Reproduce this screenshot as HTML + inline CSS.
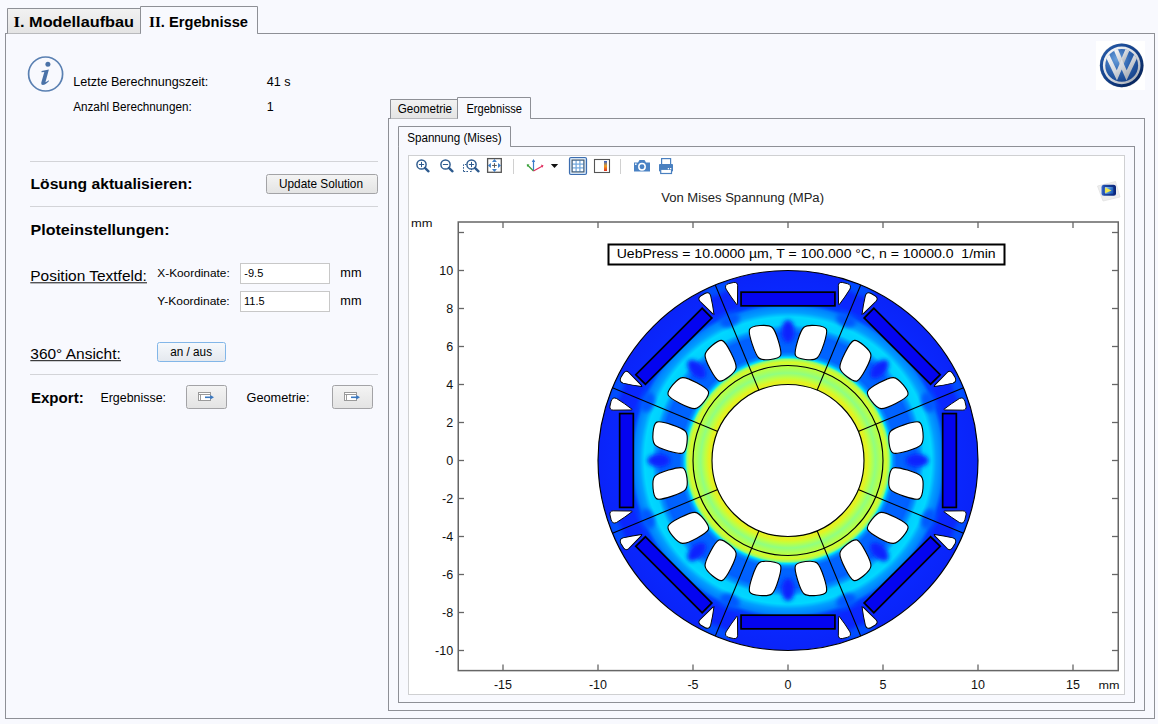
<!DOCTYPE html>
<html><head><meta charset="utf-8"><title>COMSOL App - Ergebnisse</title>
<style>
html,body{margin:0;padding:0;background:#f8f9fe;width:1158px;height:724px;overflow:hidden}
svg{display:block;font-family:"Liberation Sans",sans-serif}
</style></head><body>
<svg width="1158" height="724" viewBox="0 0 1158 724">
<defs>
<linearGradient id="tabg" x1="0" y1="0" x2="0" y2="1"><stop offset="0" stop-color="#f2f2f2"/><stop offset="1" stop-color="#e4e4e4"/></linearGradient>
<linearGradient id="btng" x1="0" y1="0" x2="0" y2="1"><stop offset="0" stop-color="#f4f4f4"/><stop offset="1" stop-color="#e3e3e3"/></linearGradient>
<linearGradient id="btnb" x1="0" y1="0" x2="0" y2="1"><stop offset="0" stop-color="#f6f9fc"/><stop offset="1" stop-color="#e4e8ee"/></linearGradient>
</defs>
<rect width="1158" height="724" fill="#f8f9fe"/>

<rect x="5.5" y="33.5" width="1149" height="685" fill="#f8f9fe" stroke="#8e9096"/>
<path d="M7.5 33.5 V8.5 H140.5 V33.5" fill="url(#tabg)" stroke="#8e9096"/>
<path d="M140.5 33.5 V6.5 H257.5 V33.5" fill="#f8f9fe" stroke="#8e9096"/>
<rect x="141" y="33" width="116" height="1.2" fill="#f8f9fe"/>
<text x="13.5" y="26.6" font-size="14.5" font-weight="bold" textLength="120.5" lengthAdjust="spacingAndGlyphs"><tspan font-family="Liberation Serif" font-size="15">I</tspan>. Modellaufbau</text>
<text x="149" y="26.6" font-size="14.5" font-weight="bold" textLength="99" lengthAdjust="spacingAndGlyphs"><tspan font-family="Liberation Serif" font-size="15">II</tspan>. Ergebnisse</text>
<circle cx="45.6" cy="74" r="17" fill="none" stroke="#5a80b2" stroke-width="1.7"/>
<circle cx="47.9" cy="64.2" r="2.5" fill="#4a72a8"/>
<path d="M41.6 70.9 L48.9 69.5 L45.4 82.2 Q46.9 81.6 48.7 80.3 L48.9 81.2 Q45.6 84.9 42.6 84.9 Q40.7 84.8 41.3 82.6 L44.3 72.1 L41.5 72.2 Z" fill="#4a72a8"/>
<text x="73.2" y="85.8" font-size="12" font-weight="normal" fill="#000" text-anchor="start" textLength="135" lengthAdjust="spacingAndGlyphs" >Letzte Berechnungszeit:</text>
<text x="266.8" y="85.8" font-size="12.5" font-weight="normal" fill="#000" text-anchor="start" textLength="23.8" lengthAdjust="spacingAndGlyphs" >41 s</text>
<text x="73.2" y="110.9" font-size="12" font-weight="normal" fill="#000" text-anchor="start" textLength="118.5" lengthAdjust="spacingAndGlyphs" >Anzahl Berechnungen:</text>
<text x="266.8" y="110.9" font-size="12.5" font-weight="normal" fill="#000" text-anchor="start" >1</text>
<line x1="30" y1="161.5" x2="378" y2="161.5" stroke="#d3d4d8"/>
<line x1="30" y1="206.5" x2="378" y2="206.5" stroke="#d3d4d8"/>
<line x1="30" y1="374.5" x2="378" y2="374.5" stroke="#d3d4d8"/>
<text x="30.5" y="189" font-size="14" font-weight="bold" fill="#000" text-anchor="start" textLength="162" lengthAdjust="spacingAndGlyphs" >Lösung aktualisieren:</text>
<rect x="266.5" y="174.5" width="111" height="19" rx="2" fill="url(#btng)" stroke="#a3a3a6"/>
<text x="279" y="188.2" font-size="12.2" font-weight="normal" fill="#000" text-anchor="start" textLength="84" lengthAdjust="spacingAndGlyphs" >Update Solution</text>
<text x="30.5" y="234.7" font-size="14" font-weight="bold" fill="#000" text-anchor="start" textLength="139" lengthAdjust="spacingAndGlyphs" >Ploteinstellungen:</text>
<text x="30.3" y="280.7" font-size="15" font-weight="normal" fill="#000" text-anchor="start" textLength="116.5" lengthAdjust="spacingAndGlyphs" >Position Textfeld:</text>
<line x1="30.3" y1="282.8" x2="147" y2="282.8" stroke="#111" stroke-width="1"/>
<text x="157.3" y="276.9" font-size="11" font-weight="normal" fill="#000" text-anchor="start" textLength="72.4" lengthAdjust="spacingAndGlyphs" >X-Koordinate:</text>
<text x="157.3" y="304.7" font-size="11" font-weight="normal" fill="#000" text-anchor="start" textLength="72.4" lengthAdjust="spacingAndGlyphs" >Y-Koordinate:</text>
<rect x="240.5" y="263.5" width="89" height="20" fill="#fff" stroke="#c8c8c8"/>
<rect x="240.5" y="291.5" width="89" height="20" fill="#fff" stroke="#c8c8c8"/>
<text x="244.3" y="277.3" font-size="11" font-weight="normal" fill="#000" text-anchor="start" >-9.5</text>
<text x="244" y="305" font-size="11" font-weight="normal" fill="#000" text-anchor="start" >11.5</text>
<text x="340.3" y="277" font-size="12" font-weight="normal" fill="#000" text-anchor="start" textLength="21.2" lengthAdjust="spacingAndGlyphs" >mm</text>
<text x="340.3" y="305" font-size="12" font-weight="normal" fill="#000" text-anchor="start" textLength="21.2" lengthAdjust="spacingAndGlyphs" >mm</text>
<text x="30.3" y="358.6" font-size="15" font-weight="normal" fill="#000" text-anchor="start" textLength="90.5" lengthAdjust="spacingAndGlyphs" >360° Ansicht:</text>
<line x1="30.3" y1="360.7" x2="121" y2="360.7" stroke="#111" stroke-width="1"/>
<rect x="157.5" y="342.5" width="68" height="19" rx="2" fill="url(#btnb)" stroke="#82b6e8"/>
<text x="170.3" y="356.4" font-size="12" font-weight="normal" fill="#000" text-anchor="start" textLength="41.7" lengthAdjust="spacingAndGlyphs" >an / aus</text>
<text x="30.9" y="403" font-size="14.6" font-weight="bold" fill="#000" text-anchor="start" textLength="52.8" lengthAdjust="spacingAndGlyphs" >Export:</text>
<text x="100.4" y="402" font-size="12.5" font-weight="normal" fill="#000" text-anchor="start" textLength="65.6" lengthAdjust="spacingAndGlyphs" >Ergebnisse:</text>
<text x="246.5" y="402" font-size="12.5" font-weight="normal" fill="#000" text-anchor="start" textLength="63" lengthAdjust="spacingAndGlyphs" >Geometrie:</text>
<rect x="186.5" y="385.5" width="40" height="23" rx="2" fill="url(#btng)" stroke="#a3a3a6"/>
<rect x="198.5" y="392.5" width="12" height="8" fill="#fff" stroke="#9a9a9a" stroke-width="1"/>
<path d="M198.5 394.5 H210.5 M200.5 394.5 V400.5" fill="none" stroke="#9a9a9a" stroke-width="1"/>
<path d="M205 397.3 H211" stroke="#3a78c0" stroke-width="1.6"/><path d="M210.3 395 L214 397.3 L210.3 399.6 Z" fill="#3a78c0"/>
<rect x="332.5" y="385.5" width="40" height="23" rx="2" fill="url(#btng)" stroke="#a3a3a6"/>
<rect x="344.5" y="392.5" width="12" height="8" fill="#fff" stroke="#9a9a9a" stroke-width="1"/>
<path d="M344.5 394.5 H356.5 M346.5 394.5 V400.5" fill="none" stroke="#9a9a9a" stroke-width="1"/>
<path d="M351 397.3 H357" stroke="#3a78c0" stroke-width="1.6"/><path d="M356.3 395 L360 397.3 L356.3 399.6 Z" fill="#3a78c0"/>
<rect x="1096" y="41" width="49" height="49" fill="#fff"/>
<g transform="translate(1121.7 65.4)">
<defs><radialGradient id="vwb" cx="0.35" cy="0.3" r="0.8"><stop offset="0" stop-color="#6aa0dc"/><stop offset="0.5" stop-color="#2e64b0"/><stop offset="1" stop-color="#143f86"/></radialGradient>
<linearGradient id="vwo" x1="0" y1="0" x2="1" y2="1"><stop offset="0" stop-color="#2a5eac"/><stop offset="0.5" stop-color="#123f88"/><stop offset="1" stop-color="#041c4c"/></linearGradient>
<linearGradient id="vws" x1="0" y1="0" x2="1" y2="1"><stop offset="0" stop-color="#ffffff"/><stop offset="0.55" stop-color="#d4d8de"/><stop offset="1" stop-color="#9aa0a8"/></linearGradient>
<clipPath id="vwc"><circle r="16.6"/></clipPath></defs>
<circle r="22" fill="#c8ccd2"/>
<circle r="21.8" fill="url(#vwo)"/>
<circle r="18.8" fill="url(#vws)"/>
<circle r="16.4" fill="url(#vwb)"/>
<g clip-path="url(#vwc)" fill="none" stroke="url(#vws)" stroke-width="4.2" stroke-linejoin="miter" stroke-miterlimit="10">
<path d="M-7.0 -18.5 L0 -2.0 L7.0 -18.5"/>
<path d="M-16 -13.5 L-4.85 10 L0 -1.2 L4.85 10 L16 -13.5"/>
</g>
</g>
<rect x="388.5" y="118.5" width="756" height="592" fill="#f8f9fe" stroke="#8e9096"/>
<path d="M390.5 118.5 V99.5 H457.5 V118.5" fill="url(#tabg)" stroke="#8e9096"/>
<path d="M457.5 118.5 V97.5 H530.5 V118.5" fill="#f8f9fe" stroke="#8e9096"/>
<rect x="458" y="118" width="72" height="1.2" fill="#f8f9fe"/>
<text x="397.7" y="112.9" font-size="12.2" font-weight="normal" fill="#000" text-anchor="start" textLength="54.4" lengthAdjust="spacingAndGlyphs" >Geometrie</text>
<text x="466.4" y="112.9" font-size="12.2" font-weight="normal" fill="#000" text-anchor="start" textLength="55.6" lengthAdjust="spacingAndGlyphs" >Ergebnisse</text>
<rect x="398.5" y="146.5" width="736" height="556" fill="#f8f9fe" stroke="#8e9096"/>
<path d="M398.5 146.5 V126.5 H510.5 V146.5" fill="#f8f9fe" stroke="#8e9096"/>
<rect x="399" y="146" width="111" height="1.2" fill="#f8f9fe"/>
<text x="407.2" y="142.2" font-size="12" font-weight="normal" fill="#000" text-anchor="start" textLength="94.4" lengthAdjust="spacingAndGlyphs" >Spannung (Mises)</text>
<rect x="408.5" y="155.5" width="716" height="539" fill="#fff" stroke="#cfd0d2"/>
<circle cx="421.5" cy="164.5" r="4.6" fill="none" stroke="#2d5a8e" stroke-width="1.45"/>
<line x1="424.9" y1="167.9" x2="428.5" y2="171.3" stroke="#2d5a8e" stroke-width="2.4" stroke-linecap="round"/>
<line x1="418.9" y1="164.5" x2="424.1" y2="164.5" stroke="#2d5a8e" stroke-width="1"/>
<line x1="421.5" y1="161.9" x2="421.5" y2="167.1" stroke="#2d5a8e" stroke-width="1"/>
<circle cx="445.5" cy="164.5" r="4.6" fill="none" stroke="#2d5a8e" stroke-width="1.45"/>
<line x1="448.9" y1="167.9" x2="452.5" y2="171.3" stroke="#2d5a8e" stroke-width="2.4" stroke-linecap="round"/>
<line x1="442.9" y1="164.5" x2="448.1" y2="164.5" stroke="#2d5a8e" stroke-width="1"/>
<path d="M463.5 171.5 V164.5 H466 M468 171.5 H463.5 M470 171.5 H471.5 V169" fill="none" stroke="#2d5a8e" stroke-width="1" stroke-dasharray="1.6 1.2"/>
<circle cx="471.5" cy="164.5" r="4.6" fill="none" stroke="#2d5a8e" stroke-width="1.45"/>
<line x1="474.9" y1="167.9" x2="478.5" y2="171.3" stroke="#2d5a8e" stroke-width="2.4" stroke-linecap="round"/>
<line x1="468.9" y1="164.5" x2="474.1" y2="164.5" stroke="#2d5a8e" stroke-width="1"/>
<line x1="471.5" y1="161.9" x2="471.5" y2="167.1" stroke="#2d5a8e" stroke-width="1"/>
<rect x="487.6" y="158.6" width="13.7" height="13.7" fill="#fff" stroke="#555" stroke-width="1.3"/>
<path d="M494.45 163.1 V167.8 M492.1 165.45 H496.8" stroke="#555" stroke-width="1"/>
<path d="M492 161.9 L494.45 158.9 L496.9 161.9 Z M492 169.0 L494.45 172.0 L496.9 169.0 Z M490.9 163.0 L487.9 165.45 L490.9 167.9 Z M498.0 163.0 L501.0 165.45 L498.0 167.9 Z" fill="#3f7fc8"/>
<line x1="513.5" y1="159" x2="513.5" y2="174" stroke="#d0d0d0"/>
<path d="M533.5 171 V160" stroke="#3a7ac8" stroke-width="1.2"/><path d="M531.8 162 L533.5 159 L535.2 162Z" fill="#3a7ac8"/>
<path d="M533.5 171 L527.5 165" stroke="#3aa03a" stroke-width="1.2"/><path d="M527 167 L526.8 164.3 L529.5 164.5Z" fill="#3aa03a"/>
<path d="M533.5 171 L542.5 166" stroke="#e03060" stroke-width="1.2"/><path d="M541 164.6 L543.6 165.4 L542.1 167.8Z" fill="#e03060"/>
<path d="M550.8 164 H558.2 L554.5 168 Z" fill="#111"/>
<rect x="569.5" y="157.5" width="17" height="17" rx="1.5" fill="#cfe3f7" stroke="#3c6db0" stroke-width="1.2"/>
<rect x="572" y="160" width="12" height="12" fill="#6fa6dc" stroke="#444" stroke-width="0.8"/>
<rect x="572.9" y="160.9" width="2.6" height="2.6" fill="#fff"/>
<rect x="572.9" y="164.70000000000002" width="2.6" height="2.6" fill="#fff"/>
<rect x="572.9" y="168.5" width="2.6" height="2.6" fill="#fff"/>
<rect x="576.6999999999999" y="160.9" width="2.6" height="2.6" fill="#fff"/>
<rect x="576.6999999999999" y="164.70000000000002" width="2.6" height="2.6" fill="#fff"/>
<rect x="576.6999999999999" y="168.5" width="2.6" height="2.6" fill="#fff"/>
<rect x="580.5" y="160.9" width="2.6" height="2.6" fill="#fff"/>
<rect x="580.5" y="164.70000000000002" width="2.6" height="2.6" fill="#fff"/>
<rect x="580.5" y="168.5" width="2.6" height="2.6" fill="#fff"/>
<rect x="594.5" y="159.5" width="15" height="13" fill="#fff" stroke="#555" stroke-width="1.1"/>
<defs><linearGradient id="lg" x1="0" y1="0" x2="0" y2="1"><stop offset="0" stop-color="#3060d0"/><stop offset="0.5" stop-color="#f0a020"/><stop offset="1" stop-color="#e03020"/></linearGradient></defs>
<rect x="604" y="161" width="3" height="10" fill="url(#lg)"/>
<line x1="620.5" y1="159" x2="620.5" y2="174" stroke="#d0d0d0"/>
<path d="M634 162.5 H638 L639.5 160 H644.5 L646 162.5 H650 V171.5 H634 Z" fill="#4a82c4"/>
<circle cx="642" cy="166.8" r="3.2" fill="none" stroke="#fff" stroke-width="1.5"/>
<rect x="635" y="163.5" width="1.6" height="1.4" fill="#fff"/>
<rect x="661.6" y="158.6" width="9" height="6" fill="#fff" stroke="#4a80c0" stroke-width="1.2"/>
<rect x="659" y="164" width="14" height="7.6" rx="0.8" fill="#4a80c0"/>
<rect x="660.7" y="169.3" width="10.8" height="4.2" fill="#fff" stroke="#4a80c0" stroke-width="1.2"/>
<rect x="667.8" y="168" width="1.3" height="1.3" fill="#fff"/><rect x="670" y="168" width="1.3" height="1.3" fill="#fff"/>
<text x="661.2" y="202.1" font-size="12.5" font-weight="normal" fill="#222" text-anchor="start" textLength="162.8" lengthAdjust="spacingAndGlyphs" >Von Mises Spannung (MPa)</text>
<defs><linearGradient id="icy" x1="0" y1="0" x2="1" y2="0.3"><stop offset="0" stop-color="#b8d8f0"/><stop offset="0.5" stop-color="#5a9ee0"/><stop offset="1" stop-color="#1e5cb8"/></linearGradient><linearGradient id="icb" x1="0" y1="0" x2="1" y2="0"><stop offset="0" stop-color="#3a6ed0"/><stop offset="0.2" stop-color="#1f4aa8"/><stop offset="1" stop-color="#0a2478"/></linearGradient></defs>
<path d="M1097.5 186 L1115.5 181.5 L1120 197 L1103 201 Z" fill="#eeeeee" stroke="#e2e2e2" stroke-width="0.8"/>
<rect x="1101.5" y="184.8" width="14.5" height="11" rx="2.5" fill="url(#icb)"/>
<rect x="1104.8" y="187" width="8.5" height="6.8" rx="0.8" fill="url(#icy)"/>
<path d="M1105.2 187.5 L1111.5 190.4 L1105.2 193.3 Z" fill="#f4ea48"/>
<rect x="458.25" y="222" width="660" height="448.6" fill="none" stroke="#666666" stroke-width="1.5"/>
<line x1="503" y1="670.5" x2="503" y2="664.5" stroke="#666666" stroke-width="1.3"/>
<line x1="503" y1="222" x2="503" y2="228" stroke="#666666" stroke-width="1.3"/>
<text x="503" y="689" font-size="12.5" font-weight="normal" fill="#111" text-anchor="middle" >-15</text>
<line x1="598" y1="670.5" x2="598" y2="664.5" stroke="#666666" stroke-width="1.3"/>
<line x1="598" y1="222" x2="598" y2="228" stroke="#666666" stroke-width="1.3"/>
<text x="598" y="689" font-size="12.5" font-weight="normal" fill="#111" text-anchor="middle" >-10</text>
<line x1="693" y1="670.5" x2="693" y2="664.5" stroke="#666666" stroke-width="1.3"/>
<line x1="693" y1="222" x2="693" y2="228" stroke="#666666" stroke-width="1.3"/>
<text x="693" y="689" font-size="12.5" font-weight="normal" fill="#111" text-anchor="middle" >-5</text>
<line x1="788" y1="670.5" x2="788" y2="664.5" stroke="#666666" stroke-width="1.3"/>
<line x1="788" y1="222" x2="788" y2="228" stroke="#666666" stroke-width="1.3"/>
<text x="788" y="689" font-size="12.5" font-weight="normal" fill="#111" text-anchor="middle" >0</text>
<line x1="883" y1="670.5" x2="883" y2="664.5" stroke="#666666" stroke-width="1.3"/>
<line x1="883" y1="222" x2="883" y2="228" stroke="#666666" stroke-width="1.3"/>
<text x="883" y="689" font-size="12.5" font-weight="normal" fill="#111" text-anchor="middle" >5</text>
<line x1="978" y1="670.5" x2="978" y2="664.5" stroke="#666666" stroke-width="1.3"/>
<line x1="978" y1="222" x2="978" y2="228" stroke="#666666" stroke-width="1.3"/>
<text x="978" y="689" font-size="12.5" font-weight="normal" fill="#111" text-anchor="middle" >10</text>
<line x1="1073" y1="670.5" x2="1073" y2="664.5" stroke="#666666" stroke-width="1.3"/>
<line x1="1073" y1="222" x2="1073" y2="228" stroke="#666666" stroke-width="1.3"/>
<text x="1073" y="689" font-size="12.5" font-weight="normal" fill="#111" text-anchor="middle" >15</text>
<line x1="458" y1="650.5" x2="464" y2="650.5" stroke="#666666" stroke-width="1.3"/>
<line x1="1118" y1="650.5" x2="1112" y2="650.5" stroke="#666666" stroke-width="1.3"/>
<text x="453.2" y="654.9" font-size="12.5" font-weight="normal" fill="#111" text-anchor="end" >-10</text>
<line x1="458" y1="612.5" x2="464" y2="612.5" stroke="#666666" stroke-width="1.3"/>
<line x1="1118" y1="612.5" x2="1112" y2="612.5" stroke="#666666" stroke-width="1.3"/>
<text x="453.2" y="616.9" font-size="12.5" font-weight="normal" fill="#111" text-anchor="end" >-8</text>
<line x1="458" y1="574.5" x2="464" y2="574.5" stroke="#666666" stroke-width="1.3"/>
<line x1="1118" y1="574.5" x2="1112" y2="574.5" stroke="#666666" stroke-width="1.3"/>
<text x="453.2" y="578.9" font-size="12.5" font-weight="normal" fill="#111" text-anchor="end" >-6</text>
<line x1="458" y1="536.5" x2="464" y2="536.5" stroke="#666666" stroke-width="1.3"/>
<line x1="1118" y1="536.5" x2="1112" y2="536.5" stroke="#666666" stroke-width="1.3"/>
<text x="453.2" y="540.9" font-size="12.5" font-weight="normal" fill="#111" text-anchor="end" >-4</text>
<line x1="458" y1="498.5" x2="464" y2="498.5" stroke="#666666" stroke-width="1.3"/>
<line x1="1118" y1="498.5" x2="1112" y2="498.5" stroke="#666666" stroke-width="1.3"/>
<text x="453.2" y="502.9" font-size="12.5" font-weight="normal" fill="#111" text-anchor="end" >-2</text>
<line x1="458" y1="460.5" x2="464" y2="460.5" stroke="#666666" stroke-width="1.3"/>
<line x1="1118" y1="460.5" x2="1112" y2="460.5" stroke="#666666" stroke-width="1.3"/>
<text x="453.2" y="464.9" font-size="12.5" font-weight="normal" fill="#111" text-anchor="end" >0</text>
<line x1="458" y1="422.5" x2="464" y2="422.5" stroke="#666666" stroke-width="1.3"/>
<line x1="1118" y1="422.5" x2="1112" y2="422.5" stroke="#666666" stroke-width="1.3"/>
<text x="453.2" y="426.9" font-size="12.5" font-weight="normal" fill="#111" text-anchor="end" >2</text>
<line x1="458" y1="384.5" x2="464" y2="384.5" stroke="#666666" stroke-width="1.3"/>
<line x1="1118" y1="384.5" x2="1112" y2="384.5" stroke="#666666" stroke-width="1.3"/>
<text x="453.2" y="388.9" font-size="12.5" font-weight="normal" fill="#111" text-anchor="end" >4</text>
<line x1="458" y1="346.5" x2="464" y2="346.5" stroke="#666666" stroke-width="1.3"/>
<line x1="1118" y1="346.5" x2="1112" y2="346.5" stroke="#666666" stroke-width="1.3"/>
<text x="453.2" y="350.9" font-size="12.5" font-weight="normal" fill="#111" text-anchor="end" >6</text>
<line x1="458" y1="308.5" x2="464" y2="308.5" stroke="#666666" stroke-width="1.3"/>
<line x1="1118" y1="308.5" x2="1112" y2="308.5" stroke="#666666" stroke-width="1.3"/>
<text x="453.2" y="312.9" font-size="12.5" font-weight="normal" fill="#111" text-anchor="end" >8</text>
<line x1="458" y1="270.5" x2="464" y2="270.5" stroke="#666666" stroke-width="1.3"/>
<line x1="1118" y1="270.5" x2="1112" y2="270.5" stroke="#666666" stroke-width="1.3"/>
<text x="453.2" y="274.9" font-size="12.5" font-weight="normal" fill="#111" text-anchor="end" >10</text>
<line x1="458" y1="232.5" x2="464" y2="232.5" stroke="#666666" stroke-width="1.3"/>
<line x1="1118" y1="232.5" x2="1112" y2="232.5" stroke="#666666" stroke-width="1.3"/>
<text x="411" y="226.8" font-size="11.5" font-weight="normal" fill="#111" text-anchor="start" textLength="21.5" lengthAdjust="spacingAndGlyphs" >mm</text>
<text x="1098.5" y="689" font-size="11.5" font-weight="normal" fill="#111" text-anchor="start" textLength="21" lengthAdjust="spacingAndGlyphs" >mm</text>
<g transform="translate(788 460.5) scale(19)">
<defs>
<radialGradient id="field" cx="0" cy="0" r="10" gradientUnits="userSpaceOnUse">
<stop offset="0.400" stop-color="#d8f828"/>
<stop offset="0.415" stop-color="#e8f020"/>
<stop offset="0.435" stop-color="#c0ff40"/>
<stop offset="0.460" stop-color="#90ff80"/>
<stop offset="0.485" stop-color="#b0ff50"/>
<stop offset="0.502" stop-color="#c0ff40"/>
<stop offset="0.517" stop-color="#d8f828"/>
<stop offset="0.532" stop-color="#90ff70"/>
<stop offset="0.542" stop-color="#00e0ff"/>
<stop offset="0.555" stop-color="#0090ff"/>
<stop offset="0.572" stop-color="#0064ff"/>
<stop offset="0.670" stop-color="#0060ff"/>
<stop offset="0.695" stop-color="#0090ff"/>
<stop offset="0.715" stop-color="#00d0ff"/>
<stop offset="0.755" stop-color="#00d8ff"/>
<stop offset="0.780" stop-color="#00a0ff"/>
<stop offset="0.810" stop-color="#0080ff"/>
<stop offset="0.830" stop-color="#0040ff"/>
<stop offset="0.860" stop-color="#0a28ff"/>
<stop offset="1.000" stop-color="#0a24f8"/>
</radialGradient>
<filter id="blur1" x="-50%" y="-50%" width="200%" height="200%"><feGaussianBlur stdDeviation="0.12"/></filter>
<clipPath id="disk"><circle r="10"/></clipPath>
</defs>
<circle r="10" fill="url(#field)"/>
<g clip-path="url(#disk)" filter="url(#blur1)">
<ellipse cx="6.8" cy="0" rx="0.6" ry="0.34" fill="#0a20ff" transform="rotate(0)"/>
<ellipse cx="9.75" cy="0" rx="0.3" ry="0.9" fill="#0050ff" transform="rotate(-22.5)"/>
<ellipse cx="8.0" cy="0" rx="0.35" ry="0.55" fill="#0058ff" transform="rotate(-22.5)"/>
<ellipse cx="6.8" cy="0" rx="0.6" ry="0.34" fill="#0a20ff" transform="rotate(-45)"/>
<ellipse cx="9.75" cy="0" rx="0.3" ry="0.9" fill="#0050ff" transform="rotate(-67.5)"/>
<ellipse cx="8.0" cy="0" rx="0.35" ry="0.55" fill="#0058ff" transform="rotate(-67.5)"/>
<ellipse cx="6.8" cy="0" rx="0.6" ry="0.34" fill="#0a20ff" transform="rotate(-90)"/>
<ellipse cx="9.75" cy="0" rx="0.3" ry="0.9" fill="#0050ff" transform="rotate(-112.5)"/>
<ellipse cx="8.0" cy="0" rx="0.35" ry="0.55" fill="#0058ff" transform="rotate(-112.5)"/>
<ellipse cx="6.8" cy="0" rx="0.6" ry="0.34" fill="#0a20ff" transform="rotate(-135)"/>
<ellipse cx="9.75" cy="0" rx="0.3" ry="0.9" fill="#0050ff" transform="rotate(-157.5)"/>
<ellipse cx="8.0" cy="0" rx="0.35" ry="0.55" fill="#0058ff" transform="rotate(-157.5)"/>
<ellipse cx="6.8" cy="0" rx="0.6" ry="0.34" fill="#0a20ff" transform="rotate(-180)"/>
<ellipse cx="9.75" cy="0" rx="0.3" ry="0.9" fill="#0050ff" transform="rotate(-202.5)"/>
<ellipse cx="8.0" cy="0" rx="0.35" ry="0.55" fill="#0058ff" transform="rotate(-202.5)"/>
<ellipse cx="6.8" cy="0" rx="0.6" ry="0.34" fill="#0a20ff" transform="rotate(-225)"/>
<ellipse cx="9.75" cy="0" rx="0.3" ry="0.9" fill="#0050ff" transform="rotate(-247.5)"/>
<ellipse cx="8.0" cy="0" rx="0.35" ry="0.55" fill="#0058ff" transform="rotate(-247.5)"/>
<ellipse cx="6.8" cy="0" rx="0.6" ry="0.34" fill="#0a20ff" transform="rotate(-270)"/>
<ellipse cx="9.75" cy="0" rx="0.3" ry="0.9" fill="#0050ff" transform="rotate(-292.5)"/>
<ellipse cx="8.0" cy="0" rx="0.35" ry="0.55" fill="#0058ff" transform="rotate(-292.5)"/>
<ellipse cx="6.8" cy="0" rx="0.6" ry="0.34" fill="#0a20ff" transform="rotate(-315)"/>
<ellipse cx="9.75" cy="0" rx="0.3" ry="0.9" fill="#0050ff" transform="rotate(-337.5)"/>
<ellipse cx="8.0" cy="0" rx="0.35" ry="0.55" fill="#0058ff" transform="rotate(-337.5)"/>
</g>
<g fill="#fff" stroke="#000" stroke-width="0.06">
<path d="M5.318 -0.916 C5.241 -1.525 5.323 -1.622 6.136 -1.888 C6.949 -2.154 7.046 -2.113 7.103 -1.476 C7.160 -0.839 7.078 -0.742 6.285 -0.504 C5.492 -0.265 5.395 -0.306 5.318 -0.916 Z"/>
<path d="M5.318 0.916 C5.241 1.525 5.323 1.622 6.136 1.888 C6.949 2.154 7.046 2.113 7.103 1.476 C7.160 0.839 7.078 0.742 6.285 0.504 C5.492 0.265 5.395 0.306 5.318 0.916 Z"/>
<path d="M3.113 -4.408 C2.627 -4.784 2.617 -4.911 3.003 -5.674 C3.390 -6.437 3.488 -6.476 3.979 -6.067 C4.469 -5.657 4.480 -5.530 4.088 -4.800 C3.696 -4.071 3.598 -4.031 3.113 -4.408 Z"/>
<path d="M4.408 -3.113 C4.784 -2.627 4.911 -2.617 5.674 -3.003 C6.437 -3.390 6.476 -3.488 6.067 -3.979 C5.657 -4.469 5.530 -4.480 4.800 -4.088 C4.071 -3.696 4.031 -3.598 4.408 -3.113 Z"/>
<path d="M-0.916 -5.318 C-1.525 -5.241 -1.622 -5.323 -1.888 -6.136 C-2.154 -6.949 -2.113 -7.046 -1.476 -7.103 C-0.839 -7.160 -0.742 -7.078 -0.504 -6.285 C-0.265 -5.492 -0.306 -5.395 -0.916 -5.318 Z"/>
<path d="M0.916 -5.318 C1.525 -5.241 1.622 -5.323 1.888 -6.136 C2.154 -6.949 2.113 -7.046 1.476 -7.103 C0.839 -7.160 0.742 -7.078 0.504 -6.285 C0.265 -5.492 0.306 -5.395 0.916 -5.318 Z"/>
<path d="M-4.408 -3.113 C-4.784 -2.627 -4.911 -2.617 -5.674 -3.003 C-6.437 -3.390 -6.476 -3.488 -6.067 -3.979 C-5.657 -4.469 -5.530 -4.480 -4.800 -4.088 C-4.071 -3.696 -4.031 -3.598 -4.408 -3.113 Z"/>
<path d="M-3.113 -4.408 C-2.627 -4.784 -2.617 -4.911 -3.003 -5.674 C-3.390 -6.437 -3.488 -6.476 -3.979 -6.067 C-4.469 -5.657 -4.480 -5.530 -4.088 -4.800 C-3.696 -4.071 -3.598 -4.031 -3.113 -4.408 Z"/>
<path d="M-5.318 0.916 C-5.241 1.525 -5.323 1.622 -6.136 1.888 C-6.949 2.154 -7.046 2.113 -7.103 1.476 C-7.160 0.839 -7.078 0.742 -6.285 0.504 C-5.492 0.265 -5.395 0.306 -5.318 0.916 Z"/>
<path d="M-5.318 -0.916 C-5.241 -1.525 -5.323 -1.622 -6.136 -1.888 C-6.949 -2.154 -7.046 -2.113 -7.103 -1.476 C-7.160 -0.839 -7.078 -0.742 -6.285 -0.504 C-5.492 -0.265 -5.395 -0.306 -5.318 -0.916 Z"/>
<path d="M-3.113 4.408 C-2.627 4.784 -2.617 4.911 -3.003 5.674 C-3.390 6.437 -3.488 6.476 -3.979 6.067 C-4.469 5.657 -4.480 5.530 -4.088 4.800 C-3.696 4.071 -3.598 4.031 -3.113 4.408 Z"/>
<path d="M-4.408 3.113 C-4.784 2.627 -4.911 2.617 -5.674 3.003 C-6.437 3.390 -6.476 3.488 -6.067 3.979 C-5.657 4.469 -5.530 4.480 -4.800 4.088 C-4.071 3.696 -4.031 3.598 -4.408 3.113 Z"/>
<path d="M0.916 5.318 C1.525 5.241 1.622 5.323 1.888 6.136 C2.154 6.949 2.113 7.046 1.476 7.103 C0.839 7.160 0.742 7.078 0.504 6.285 C0.265 5.492 0.306 5.395 0.916 5.318 Z"/>
<path d="M-0.916 5.318 C-1.525 5.241 -1.622 5.323 -1.888 6.136 C-2.154 6.949 -2.113 7.046 -1.476 7.103 C-0.839 7.160 -0.742 7.078 -0.504 6.285 C-0.265 5.492 -0.306 5.395 -0.916 5.318 Z"/>
<path d="M4.408 3.113 C4.784 2.627 4.911 2.617 5.674 3.003 C6.437 3.390 6.476 3.488 6.067 3.979 C5.657 4.469 5.530 4.480 4.800 4.088 C4.071 3.696 4.031 3.598 4.408 3.113 Z"/>
<path d="M3.113 4.408 C2.627 4.784 2.617 4.911 3.003 5.674 C3.390 6.437 3.488 6.476 3.979 6.067 C4.469 5.657 4.480 5.530 4.088 4.800 C3.696 4.071 3.598 4.031 3.113 4.408 Z"/>
</g>
<circle r="4" fill="#fff" stroke="#000" stroke-width="0.06"/>
<circle r="5" fill="none" stroke="#000" stroke-width="0.06"/>
<line x1="0" y1="-4" x2="0" y2="-10" transform="rotate(22.5)" stroke="#000" stroke-width="0.055"/>
<line x1="0" y1="-4" x2="0" y2="-10" transform="rotate(67.5)" stroke="#000" stroke-width="0.055"/>
<line x1="0" y1="-4" x2="0" y2="-10" transform="rotate(112.5)" stroke="#000" stroke-width="0.055"/>
<line x1="0" y1="-4" x2="0" y2="-10" transform="rotate(157.5)" stroke="#000" stroke-width="0.055"/>
<line x1="0" y1="-4" x2="0" y2="-10" transform="rotate(202.5)" stroke="#000" stroke-width="0.055"/>
<line x1="0" y1="-4" x2="0" y2="-10" transform="rotate(247.5)" stroke="#000" stroke-width="0.055"/>
<line x1="0" y1="-4" x2="0" y2="-10" transform="rotate(292.5)" stroke="#000" stroke-width="0.055"/>
<line x1="0" y1="-4" x2="0" y2="-10" transform="rotate(337.5)" stroke="#000" stroke-width="0.055"/>
<g transform="rotate(0)">
<rect x="-2.47" y="-8.86" width="4.94" height="0.72" fill="#0404f0" stroke="#000" stroke-width="0.09"/>
<path d="M2.66 -8.25 L2.65 -9.2 Q2.66 -9.4 2.86 -9.37 L3.12 -9.31 Q3.36 -9.24 3.26 -9.02 Q3.0 -8.6 2.69 -8.2 Z" fill="#fff" stroke="#000" stroke-width="0.05"/>
<path d="M-2.66 -8.25 L-2.65 -9.2 Q-2.66 -9.4 -2.86 -9.37 L-3.12 -9.31 Q-3.36 -9.24 -3.26 -9.02 Q-3.0 -8.6 -2.69 -8.2 Z" fill="#fff" stroke="#000" stroke-width="0.05"/>
</g>
<g transform="rotate(45)">
<rect x="-2.47" y="-8.86" width="4.94" height="0.72" fill="#0404f0" stroke="#000" stroke-width="0.09"/>
<path d="M2.66 -8.25 L2.65 -9.2 Q2.66 -9.4 2.86 -9.37 L3.12 -9.31 Q3.36 -9.24 3.26 -9.02 Q3.0 -8.6 2.69 -8.2 Z" fill="#fff" stroke="#000" stroke-width="0.05"/>
<path d="M-2.66 -8.25 L-2.65 -9.2 Q-2.66 -9.4 -2.86 -9.37 L-3.12 -9.31 Q-3.36 -9.24 -3.26 -9.02 Q-3.0 -8.6 -2.69 -8.2 Z" fill="#fff" stroke="#000" stroke-width="0.05"/>
</g>
<g transform="rotate(90)">
<rect x="-2.47" y="-8.86" width="4.94" height="0.72" fill="#0404f0" stroke="#000" stroke-width="0.09"/>
<path d="M2.66 -8.25 L2.65 -9.2 Q2.66 -9.4 2.86 -9.37 L3.12 -9.31 Q3.36 -9.24 3.26 -9.02 Q3.0 -8.6 2.69 -8.2 Z" fill="#fff" stroke="#000" stroke-width="0.05"/>
<path d="M-2.66 -8.25 L-2.65 -9.2 Q-2.66 -9.4 -2.86 -9.37 L-3.12 -9.31 Q-3.36 -9.24 -3.26 -9.02 Q-3.0 -8.6 -2.69 -8.2 Z" fill="#fff" stroke="#000" stroke-width="0.05"/>
</g>
<g transform="rotate(135)">
<rect x="-2.47" y="-8.86" width="4.94" height="0.72" fill="#0404f0" stroke="#000" stroke-width="0.09"/>
<path d="M2.66 -8.25 L2.65 -9.2 Q2.66 -9.4 2.86 -9.37 L3.12 -9.31 Q3.36 -9.24 3.26 -9.02 Q3.0 -8.6 2.69 -8.2 Z" fill="#fff" stroke="#000" stroke-width="0.05"/>
<path d="M-2.66 -8.25 L-2.65 -9.2 Q-2.66 -9.4 -2.86 -9.37 L-3.12 -9.31 Q-3.36 -9.24 -3.26 -9.02 Q-3.0 -8.6 -2.69 -8.2 Z" fill="#fff" stroke="#000" stroke-width="0.05"/>
</g>
<g transform="rotate(180)">
<rect x="-2.47" y="-8.86" width="4.94" height="0.72" fill="#0404f0" stroke="#000" stroke-width="0.09"/>
<path d="M2.66 -8.25 L2.65 -9.2 Q2.66 -9.4 2.86 -9.37 L3.12 -9.31 Q3.36 -9.24 3.26 -9.02 Q3.0 -8.6 2.69 -8.2 Z" fill="#fff" stroke="#000" stroke-width="0.05"/>
<path d="M-2.66 -8.25 L-2.65 -9.2 Q-2.66 -9.4 -2.86 -9.37 L-3.12 -9.31 Q-3.36 -9.24 -3.26 -9.02 Q-3.0 -8.6 -2.69 -8.2 Z" fill="#fff" stroke="#000" stroke-width="0.05"/>
</g>
<g transform="rotate(225)">
<rect x="-2.47" y="-8.86" width="4.94" height="0.72" fill="#0404f0" stroke="#000" stroke-width="0.09"/>
<path d="M2.66 -8.25 L2.65 -9.2 Q2.66 -9.4 2.86 -9.37 L3.12 -9.31 Q3.36 -9.24 3.26 -9.02 Q3.0 -8.6 2.69 -8.2 Z" fill="#fff" stroke="#000" stroke-width="0.05"/>
<path d="M-2.66 -8.25 L-2.65 -9.2 Q-2.66 -9.4 -2.86 -9.37 L-3.12 -9.31 Q-3.36 -9.24 -3.26 -9.02 Q-3.0 -8.6 -2.69 -8.2 Z" fill="#fff" stroke="#000" stroke-width="0.05"/>
</g>
<g transform="rotate(270)">
<rect x="-2.47" y="-8.86" width="4.94" height="0.72" fill="#0404f0" stroke="#000" stroke-width="0.09"/>
<path d="M2.66 -8.25 L2.65 -9.2 Q2.66 -9.4 2.86 -9.37 L3.12 -9.31 Q3.36 -9.24 3.26 -9.02 Q3.0 -8.6 2.69 -8.2 Z" fill="#fff" stroke="#000" stroke-width="0.05"/>
<path d="M-2.66 -8.25 L-2.65 -9.2 Q-2.66 -9.4 -2.86 -9.37 L-3.12 -9.31 Q-3.36 -9.24 -3.26 -9.02 Q-3.0 -8.6 -2.69 -8.2 Z" fill="#fff" stroke="#000" stroke-width="0.05"/>
</g>
<g transform="rotate(315)">
<rect x="-2.47" y="-8.86" width="4.94" height="0.72" fill="#0404f0" stroke="#000" stroke-width="0.09"/>
<path d="M2.66 -8.25 L2.65 -9.2 Q2.66 -9.4 2.86 -9.37 L3.12 -9.31 Q3.36 -9.24 3.26 -9.02 Q3.0 -8.6 2.69 -8.2 Z" fill="#fff" stroke="#000" stroke-width="0.05"/>
<path d="M-2.66 -8.25 L-2.65 -9.2 Q-2.66 -9.4 -2.86 -9.37 L-3.12 -9.31 Q-3.36 -9.24 -3.26 -9.02 Q-3.0 -8.6 -2.69 -8.2 Z" fill="#fff" stroke="#000" stroke-width="0.05"/>
</g>
<circle r="10" fill="none" stroke="#000" stroke-width="0.06"/>
</g>
<rect x="608.5" y="244.5" width="396" height="20" fill="#fff" stroke="#000" stroke-width="2"/>
<text x="616.7" y="257.8" font-size="12.3" font-weight="normal" fill="#000" text-anchor="start" textLength="379" lengthAdjust="spacingAndGlyphs" >UebPress = 10.0000 µm, T = 100.000 °C, n = 10000.0  1/min</text>
</svg>
</body></html>
